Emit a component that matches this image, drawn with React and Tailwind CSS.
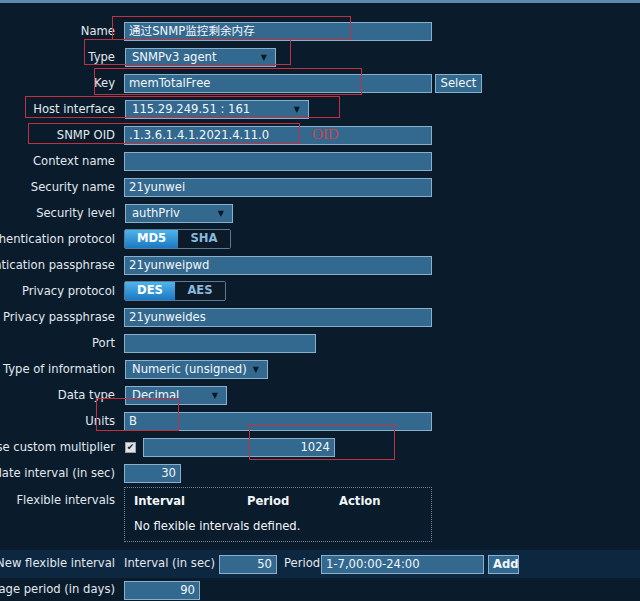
const inputCls = 'h-[19px] border border-[#8aafca] bg-[#33698f] px-[4px] leading-[17px] text-[#f4f7fa] whitespace-nowrap overflow-hidden'

function Row({ label, children }) {
  return (
    <div className="flex h-[26px] items-center">
      <div className="flex w-[115px] shrink-0 justify-end whitespace-nowrap pt-[1px] text-[#e1e8ee]">
        <span>{label}</span>
      </div>
      <div className="ml-[9px] flex items-center">{children}</div>
    </div>
  )
}

function Field({ w, value, right }) {
  return <div className={`${inputCls} ${w} ${right ? 'text-right' : ''}`}>{value}</div>
}

function Select({ w, value }) {
  return (
    <div className={`${inputCls} ${w} ml-[1px] flex items-center justify-between pl-[6px] pr-[8px]`}>
      <span>{value}</span>
      <span className="text-[8px] text-[#0a1726]">▼</span>
    </div>
  )
}

function Toggle({ on, off, w1, w2 }) {
  return (
    <div className="flex h-[20px] rounded-[2px] border border-[#5b7a93] font-bold">
      <div className={`${w1} flex items-center justify-center bg-gradient-to-b from-[#4fb4ec] to-[#1b79c2] text-white`}>{on}</div>
      <div className={`${w2} flex items-center justify-center bg-[#0d1a27] text-[#86b9de]`}>{off}</div>
    </div>
  )
}

function Mark({ className }) {
  return <div className={`pointer-events-none absolute border-[1.5px] border-[#c0323f] ${className}`} />
}

export default function App() {
  return (
    <div className="relative h-[601px] w-[640px] overflow-hidden bg-[#0a1b2c] font-['DejaVu_Sans','Noto_Sans_CJK_SC',sans-serif] text-[11.6px]">
      <div className="h-[3px] bg-[#5f89ae]" />
      <div className="pt-[15px]">
        <Row label="Name"><Field w="w-[308px]" value="通过SNMP监控剩余内存" /></Row>
        <Row label="Type"><Select w="w-[151px]" value="SNMPv3 agent" /></Row>
        <Row label="Key">
          <Field w="w-[308px]" value="memTotalFree" />
          <div className={`${inputCls} ml-[3px] w-[47px] text-center`}>Select</div>
        </Row>
        <Row label="Host interface"><Select w="w-[184px]" value="115.29.249.51 : 161" /></Row>
        <Row label="SNMP OID"><Field w="w-[308px]" value=".1.3.6.1.4.1.2021.4.11.0" /></Row>
        <Row label="Context name"><Field w="w-[308px]" value="" /></Row>
        <Row label="Security name"><Field w="w-[308px]" value="21yunwei" /></Row>
        <Row label="Security level"><Select w="w-[108px]" value="authPriv" /></Row>
        <Row label="Authentication protocol"><Toggle on="MD5" off="SHA" w1="w-[53px]" w2="w-[52px]" /></Row>
        <Row label="Authentication passphrase"><Field w="w-[308px]" value="21yunweipwd" /></Row>
        <Row label="Privacy protocol"><Toggle on="DES" off="AES" w1="w-[50px]" w2="w-[50px]" /></Row>
        <Row label="Privacy passphrase"><Field w="w-[308px]" value="21yunweides" /></Row>
        <Row label="Port"><Field w="w-[192px]" value="" /></Row>
        <Row label="Type of information"><Select w="w-[143px]" value="Numeric (unsigned)" /></Row>
        <Row label="Data type"><Select w="w-[102px]" value="Decimal" /></Row>
        <Row label="Units"><Field w="w-[308px]" value="B" /></Row>
        <Row label="Use custom multiplier">
          <div className="ml-[1px] flex h-[11px] w-[11px] items-center justify-center border border-[#9aa4ac] bg-[#dfe3e6] text-[9px] leading-none text-[#1a2530]">✔</div>
          <div className={`${inputCls} ml-[7px] w-[192px] text-right`}>1024</div>
        </Row>
        <Row label="Update interval (in sec)"><Field w="w-[57px]" value="30" right /></Row>

        <div className="mt-[1px] flex">
          <div className="flex w-[115px] shrink-0 justify-end whitespace-nowrap pt-[5px] text-[#e1e8ee]">
            <span>Flexible intervals</span>
          </div>
          <div className="ml-[9px] h-[55px] w-[308px] border border-dotted border-[#6d8397] pl-[9px] pt-[5px] text-[#f2f5f8]">
            <div className="flex font-bold">
              <span className="w-[113px]">Interval</span>
              <span className="w-[92px]">Period</span>
              <span>Action</span>
            </div>
            <div className="mt-[8px]">No flexible intervals defined.</div>
          </div>
        </div>

        <div className="mt-[8px] flex h-[28px] items-center bg-[#0e2740]">
          <div className="flex w-[115px] shrink-0 justify-end whitespace-nowrap text-[#e1e8ee]">
            <span>New flexible interval</span>
          </div>
          <div className="ml-[9px] flex items-center text-[#e1e8ee]">
            <span className="w-[95px] whitespace-nowrap">Interval (in sec)</span>
            <Field w="w-[58px]" value="50" right />
            <span className="ml-[7px] w-[37px]">Period</span>
            <Field w="w-[163px]" value="1-7,00:00-24:00" />
            <div className={`${inputCls} ml-[4px] w-[31px] text-center font-semibold`}>Add</div>
          </div>
        </div>

        <div className="flex h-[24px] items-center">
          <div className="flex w-[115px] shrink-0 justify-end whitespace-nowrap text-[#e1e8ee]">
            <span>History storage period (in days)</span>
          </div>
          <div className="ml-[9px]"><Field w="w-[76px]" value="90" right /></div>
        </div>
      </div>

      <Mark className="left-[112px] top-[16px] h-[24px] w-[239px]" />
      <Mark className="left-[84px] top-[39px] h-[26px] w-[207px]" />
      <Mark className="left-[94px] top-[68px] h-[27px] w-[268px]" />
      <Mark className="left-[25px] top-[96px] h-[22px] w-[315px]" />
      <Mark className="left-[28px] top-[123px] h-[21px] w-[272px]" />
      <Mark className="left-[96px] top-[398px] h-[33px] w-[83px]" />
      <Mark className="left-[249px] top-[424px] h-[36px] w-[146px]" />
      <span className="absolute left-[312px] top-[123px] font-['Liberation_Serif',serif] text-[15px] text-[#c94650]">OID</span>
    </div>
  )
}
